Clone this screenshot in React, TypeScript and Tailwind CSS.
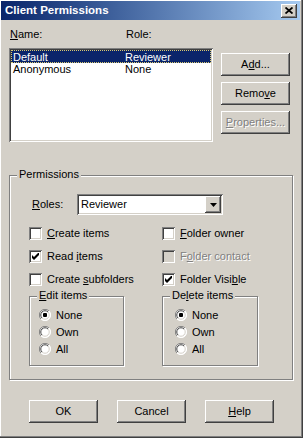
import React from "react"

const raised =
  "bg-[#d4d0c8] shadow-[inset_-1px_-1px_#404040,inset_1px_1px_#ffffff,inset_-2px_-2px_#808080,inset_2px_2px_#d4d0c8]"
const sunken =
  "shadow-[inset_1px_1px_#808080,inset_-1px_-1px_#ffffff,inset_2px_2px_#404040,inset_-2px_-2px_#d4d0c8]"

const Btn: React.FC<{ children: React.ReactNode; disabled?: boolean }> = ({ children, disabled }) => (
  <div className={`${raised} w-[69px] h-[23px] flex items-center justify-center`}>
    <span className={disabled ? "text-[#808080] [text-shadow:1px_1px_#ffffff]" : ""}>{children}</span>
  </div>
)

const Check: React.FC<{ checked?: boolean; disabled?: boolean; children: React.ReactNode }> = ({
  checked,
  disabled,
  children,
}) => (
  <div className="flex items-center h-[13px]">
    <div
      className={`${sunken} w-[13px] h-[13px] flex items-center justify-center ${disabled ? "bg-[#d4d0c8]" : "bg-white"}`}
    >
      {checked && (
        <svg width="7" height="7" viewBox="0 0 7 7">
          <polygon points="0,2 2,4 7,-1 7,2 2,7 0,5" fill="#000" />
        </svg>
      )}
    </div>
    <span className={`ml-[5px] ${disabled ? "text-[#808080] [text-shadow:1px_1px_#ffffff]" : ""}`}>
      {children}
    </span>
  </div>
)

const Radio: React.FC<{ checked?: boolean; children: React.ReactNode }> = ({ checked, children }) => (
  <div className="flex items-center h-[12px]">
    <svg width="12" height="12" viewBox="0 0 12 12">
      <circle cx="6" cy="6" r="5.5" fill="#ffffff" />
      <path d="M10 2 A5.5 5.5 0 0 0 2 10" stroke="#808080" strokeWidth="1" fill="none" />
      <path d="M9 3 A4.2 4.2 0 0 0 3 9" stroke="#404040" strokeWidth="1" fill="none" />
      <path d="M2 10 A5.5 5.5 0 0 0 10 2" stroke="#ffffff" strokeWidth="1" fill="none" />
      <path d="M3 9 A4.2 4.2 0 0 0 9 3" stroke="#d4d0c8" strokeWidth="1" fill="none" />
      {checked && <rect x="4" y="4" width="4" height="4" rx="1" fill="#000" />}
    </svg>
    <span className="ml-[5px]">{children}</span>
  </div>
)

const Group: React.FC<{ label: React.ReactNode; className: string; children?: React.ReactNode }> = ({
  label,
  className,
  children,
}) => (
  <div className={`relative border border-[#808080] shadow-[inset_1px_1px_#ffffff,1px_1px_#ffffff] ${className}`}>
    <span className="absolute -top-[8px] left-[7px] px-[2px] bg-[#d4d0c8] leading-[13px]">{label}</span>
    {children}
  </div>
)

const App: React.FC = () => {
  return (
    <div className="w-[303px] h-[438px] bg-[#d4d0c8] font-['Liberation_Sans',Arial,sans-serif] text-[11px] leading-[13px] text-black flex flex-col pt-[1px] pl-[1px] pr-[3px] shadow-[inset_-1px_-1px_#404040,inset_-2px_-2px_#808080,inset_1px_1px_#ffffff]">
      {/* title bar */}
      <div className="h-[19px] flex items-center bg-gradient-to-r from-[#0a246a] to-[#a6caf0] pl-[4px] pr-[3px]">
        <span className="text-white font-bold text-[11.5px]">Client Permissions</span>
        <div className={`${raised} ml-auto w-[16px] h-[14px] flex items-center justify-center`}>
          <svg width="8" height="7" viewBox="0 0 8 7">
            <path d="M0.5 0.5 L7.5 6.5 M7.5 0.5 L0.5 6.5" stroke="#000" strokeWidth="1.8" />
          </svg>
        </div>
      </div>

      <div className="pl-[8px]">
        <div className="flex mt-[8px] h-[13px]">
          <span className="ml-[1px] w-[116px]">
            <u>N</u>ame:
          </span>
          <span>Role:</span>
        </div>

        <div className="flex mt-[7px]">
          <div className={`${sunken} bg-white w-[204px] h-[94px] p-[2px]`}>
            <div className="flex h-[13px] bg-[#0a246a] text-white border border-dotted border-[#d8c870] pl-[1px]">
              <span className="w-[112px]">Default</span>
              <span>Reviewer</span>
            </div>
            <div className="flex h-[13px] pl-[2px]">
              <span className="w-[112px]">Anonymous</span>
              <span>None</span>
            </div>
          </div>
          <div className="flex flex-col gap-[6px] ml-[8px] pt-[5px]">
            <Btn>
              A<u>d</u>d...
            </Btn>
            <Btn>
              Remo<u>v</u>e
            </Btn>
            <Btn disabled>
              <u>P</u>roperties...
            </Btn>
          </div>
        </div>

        <Group label="Permissions" className="mt-[33px] w-[284px] h-[205px]">
          <div className="flex items-center mt-[18px] ml-[22px]">
            <span className="w-[45px]">
              <u>R</u>oles:
            </span>
            <div className={`${sunken} bg-white w-[146px] h-[21px] flex items-center p-[2px]`}>
              <span className="ml-[2px]">Reviewer</span>
              <div className={`${raised} ml-auto w-[16px] h-[17px] flex items-center justify-center`}>
                <svg width="7" height="4" viewBox="0 0 7 4">
                  <polygon points="0,0 7,0 3.5,4" fill="#000" />
                </svg>
              </div>
            </div>
          </div>

          <div className="grid grid-cols-[133px_1fr] gap-y-[10px] ml-[19px] mt-[12px]">
            <Check>
              <u>C</u>reate items
            </Check>
            <Check>
              <u>F</u>older owner
            </Check>
            <Check checked>
              Read <u>i</u>tems
            </Check>
            <Check disabled>
              F<u>o</u>lder contact
            </Check>
            <Check>
              Create <u>s</u>ubfolders
            </Check>
            <Check checked>
              Folder Visi<u>b</u>le
            </Check>
          </div>

          <div className="flex ml-[19px] mt-[10px]">
            <Group
              label={
                <>
                  <u>E</u>dit items
                </>
              }
              className="w-[95px] h-[70px]"
            >
              <div className="flex flex-col gap-[5px] mt-[12px] ml-[9px]">
                <Radio checked>None</Radio>
                <Radio>Own</Radio>
                <Radio>All</Radio>
              </div>
            </Group>
            <Group
              label={
                <>
                  De<u>l</u>ete items
                </>
              }
              className="ml-[38px] w-[96px] h-[70px]"
            >
              <div className="flex flex-col gap-[5px] mt-[12px] ml-[12px]">
                <Radio checked>None</Radio>
                <Radio>Own</Radio>
                <Radio>All</Radio>
              </div>
            </Group>
          </div>
        </Group>

        <div className="flex gap-[19px] ml-[20px] mt-[20px]">
          <Btn>OK</Btn>
          <Btn>Cancel</Btn>
          <Btn>
            <u>H</u>elp
          </Btn>
        </div>
      </div>
    </div>
  )
}

export default App
